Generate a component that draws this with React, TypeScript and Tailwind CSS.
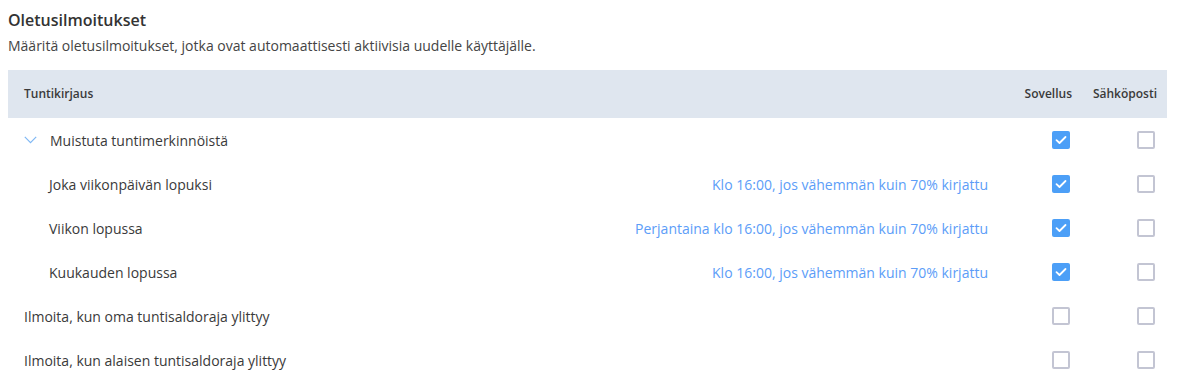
import React from "react";

const font = { fontFamily: '"Open Sans", "Noto Sans", sans-serif' };

function Check({ checked }: { checked: boolean }) {
  if (checked) {
    return (
      <div className="w-[18px] h-[18px] rounded-[2px] bg-[#4c9ff7] flex items-center justify-center">
        <svg width="12" height="10" viewBox="0 0 12 10" fill="none">
          <path d="M1.5 5.2 L4.5 8 L10.5 2" stroke="white" strokeWidth="1.8" strokeLinecap="round" strokeLinejoin="round" />
        </svg>
      </div>
    );
  }
  return <div className="w-[18px] h-[18px] rounded-[2px] border-2 border-[#c3c5d3] bg-white" />;
}

type Row = {
  label: string;
  indent: "none" | "chev" | "sub";
  hint?: string;
  app: boolean;
  mail: boolean;
};

const rows: Row[] = [
  { label: "Muistuta tuntimerkinnöistä", indent: "chev", app: true, mail: false },
  { label: "Joka viikonpäivän lopuksi", indent: "sub", hint: "Klo 16:00, jos vähemmän kuin 70% kirjattu", app: true, mail: false },
  { label: "Viikon lopussa", indent: "sub", hint: "Perjantaina klo 16:00, jos vähemmän kuin 70% kirjattu", app: true, mail: false },
  { label: "Kuukauden lopussa", indent: "sub", hint: "Klo 16:00, jos vähemmän kuin 70% kirjattu", app: true, mail: false },
  { label: "Ilmoita, kun oma tuntisaldoraja ylittyy", indent: "none", app: false, mail: false },
  { label: "Ilmoita, kun alaisen tuntisaldoraja ylittyy", indent: "none", app: false, mail: false },
];

export default function App() {
  return (
    <div className="w-[1190px] h-[380px] bg-white overflow-hidden" style={font}>
      <div className="pl-[8px] pr-[23px] pt-[8px]">
        <h2 className="text-[16px] leading-[24px] font-semibold text-[#333333]">Oletusilmoitukset</h2>
        <p className="mt-[4px] text-[14px] leading-[20px] text-[#444444]">
          Määritä oletusilmoitukset, jotka ovat automaattisesti aktiivisia uudelle käyttäjälle.
        </p>
        <div className="mt-[14px]">
          <div className="h-[48px] bg-[#dfe6ef] flex items-center text-[12px] font-semibold text-[#3a3a3a]">
            <div className="flex-1 pl-[16px]">Tuntikirjaus</div>
            <div className="w-[67px] text-right pr-[10px]">Sovellus</div>
            <div className="w-[85px] text-right pr-[10px]">Sähköposti</div>
          </div>
          {rows.map((r, i) => (
            <div key={i} className="h-[44px] flex items-center text-[14px] text-[#3a3a3a]">
              <div className="flex-1 flex items-center">
                {r.indent === "chev" && (
                  <div className="pl-[16px] w-[42px] flex items-center">
                    <svg width="13" height="8" viewBox="0 0 13 8" fill="none">
                      <path d="M0.8 0.8 L6.5 6.6 L12.2 0.8" stroke="#7fb8f4" strokeWidth="1.2" />
                    </svg>
                  </div>
                )}
                <span className={r.indent === "none" ? "pl-[16px]" : r.indent === "sub" ? "pl-[41px]" : ""}>{r.label}</span>
              </div>
              {r.hint && <div className="text-[#5c9df8] pr-[27px]">{r.hint}</div>}
              <div className="w-[67px] flex justify-end pr-[12px]">
                <Check checked={r.app} />
              </div>
              <div className="w-[85px] flex justify-end pr-[12px]">
                <Check checked={r.mail} />
              </div>
            </div>
          ))}
        </div>
      </div>
    </div>
  );
}
